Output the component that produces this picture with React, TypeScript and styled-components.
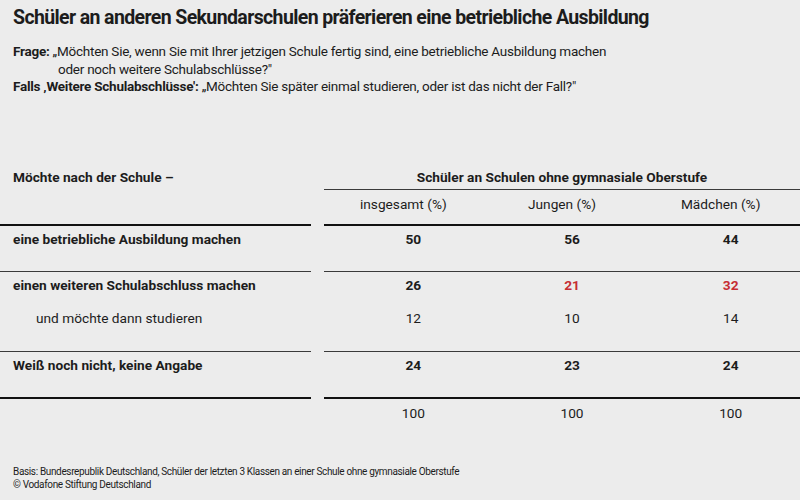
import React from "react";
import styled, { createGlobalStyle } from "styled-components";

const Global = createGlobalStyle`
  html, body { margin: 0; padding: 0; background: #ececec; }
  body { font-family: Roboto, "Noto Sans", "DejaVu Sans", sans-serif; color: #1c1c1c; }
`;

const Page = styled.div`
  width: 800px;
  height: 500px;
  box-sizing: border-box;
  background: #ececec;
  padding-top: 6px;
  display: flex;
  flex-direction: column;
  overflow: hidden;
`;

const Title = styled.h1`
  margin: 0 0 0 13px;
  font-size: 19.5px;
  line-height: 24px;
  font-weight: 700;
  letter-spacing: -0.62px;
`;

const Question = styled.div`
  margin: 13px 0 0 13px;
  font-size: 13.5px;
  line-height: 17.5px;
  letter-spacing: -0.25px;
`;

const QLine = styled.div<{ $indent?: boolean }>`
  padding-left: ${(p) => (p.$indent ? "45px" : "0")};
`;

const Strong = styled.b`
  font-weight: 700;
`;

const Table = styled.div`
  margin-top: 72px;
  display: flex;
  flex-direction: column;
  font-size: 13.7px;
  line-height: 18px;
`;

const HeaderRow = styled.div`
  display: flex;
`;

const HeaderLabel = styled.div`
  width: 311px;
  box-sizing: border-box;
  padding-left: 13px;
  font-weight: 700;
`;

const HeaderGroup = styled.div`
  flex: 1;
  margin-left: 13px;
  display: flex;
  flex-direction: column;
`;

const GroupTitle = styled.div`
  text-align: center;
  font-weight: 700;
  padding-bottom: 3px;
  border-bottom: 1px solid #3a3a3a;
`;

const SubHeads = styled.div`
  display: grid;
  grid-template-columns: repeat(3, 1fr);
  padding: 5px 0 11px;
`;

const SubHead = styled.div`
  text-align: center;
`;

const Row = styled.div`
  display: flex;
`;

const LabelCell = styled.div<{ $thick?: boolean; $pt?: number; $pb?: number }>`
  width: 311px;
  box-sizing: border-box;
  border-top: ${(p) => (p.$thick ? "2px solid #111" : "1px solid #3a3a3a")};
  padding: ${(p) => p.$pt ?? 4}px 0 ${(p) => p.$pb ?? 23}px 13px;
  display: flex;
  flex-direction: column;
  gap: 15px;
`;

const ValuesCell = styled.div<{ $thick?: boolean; $pt?: number; $pb?: number }>`
  flex: 1;
  margin-left: 13px;
  border-top: ${(p) => (p.$thick ? "2px solid #111" : "1px solid #3a3a3a")};
  padding: ${(p) => p.$pt ?? 4}px 0 ${(p) => p.$pb ?? 23}px;
  display: grid;
  grid-template-columns: repeat(3, 1fr);
  row-gap: 15px;
`;

const Label = styled.div<{ $sub?: boolean }>`
  font-weight: ${(p) => (p.$sub ? 400 : 700)};
  padding-left: ${(p) => (p.$sub ? "23px" : "0")};
`;

const Value = styled.div<{ $bold?: boolean; $red?: boolean }>`
  text-align: center;
  padding-left: 20px;
  font-weight: ${(p) => (p.$bold ? 700 : 400)};
  color: ${(p) => (p.$red ? "#c62d33" : "#1c1c1c")};
`;

const Footer = styled.div`
  margin: auto 0 9px 13px;
  font-size: 10px;
  line-height: 13px;
  letter-spacing: -0.35px;
`;

type V = { v: string; red?: boolean };

const rows: {
  thick?: boolean;
  lines: { label: string; sub?: boolean; values: V[] }[];
}[] = [
  {
    thick: true,
    lines: [
      { label: "eine betriebliche Ausbildung machen", values: [{ v: "50" }, { v: "56" }, { v: "44" }] },
    ],
  },
  {
    lines: [
      {
        label: "einen weiteren Schulabschluss machen",
        values: [{ v: "26" }, { v: "21", red: true }, { v: "32", red: true }],
      },
      { label: "und möchte dann studieren", sub: true, values: [{ v: "12" }, { v: "10" }, { v: "14" }] },
    ],
  },
  {
    lines: [
      { label: "Weiß noch nicht, keine Angabe", values: [{ v: "24" }, { v: "23" }, { v: "24" }] },
    ],
  },
];

export default function App() {
  return (
    <Page>
      <Global />
      <Title>Schüler an anderen Sekundarschulen präferieren eine betriebliche Ausbildung</Title>
      <Question>
        <QLine>
          <Strong>Frage:</Strong> „Möchten Sie, wenn Sie mit Ihrer jetzigen Schule fertig sind, eine betriebliche
          Ausbildung machen
        </QLine>
        <QLine $indent>oder noch weitere Schulabschlüsse?"</QLine>
        <QLine>
          <Strong>Falls ‚Weitere Schulabschlüsse':</Strong> „Möchten Sie später einmal studieren, oder ist das nicht der
          Fall?"
        </QLine>
      </Question>
      <Table>
        <HeaderRow>
          <HeaderLabel>Möchte nach der Schule –</HeaderLabel>
          <HeaderGroup>
            <GroupTitle>Schüler an Schulen ohne gymnasiale Oberstufe</GroupTitle>
            <SubHeads>
              <SubHead>insgesamt (%)</SubHead>
              <SubHead>Jungen (%)</SubHead>
              <SubHead>Mädchen (%)</SubHead>
            </SubHeads>
          </HeaderGroup>
        </HeaderRow>
        {rows.map((r, i) => (
          <Row key={i}>
            <LabelCell $thick={r.thick} $pb={i === 1 ? 24 : 23}>
              {r.lines.map((l) => (
                <Label key={l.label} $sub={l.sub}>
                  {l.label}
                </Label>
              ))}
            </LabelCell>
            <ValuesCell $thick={r.thick} $pb={i === 1 ? 24 : 23}>
              {r.lines.map((l) =>
                l.values.map((v, j) => (
                  <Value key={l.label + j} $bold={!l.sub} $red={v.red}>
                    {v.v}
                  </Value>
                ))
              )}
            </ValuesCell>
          </Row>
        ))}
        <Row>
          <LabelCell $thick $pt={5} $pb={0} />
          <ValuesCell $thick $pt={5} $pb={0}>
            <Value>100</Value>
            <Value>100</Value>
            <Value>100</Value>
          </ValuesCell>
        </Row>
      </Table>
      <Footer>
        Basis: Bundesrepublik Deutschland, Schüler der letzten 3 Klassen an einer Schule ohne gymnasiale Oberstufe
        <br />© Vodafone Stiftung Deutschland
      </Footer>
    </Page>
  );
}
